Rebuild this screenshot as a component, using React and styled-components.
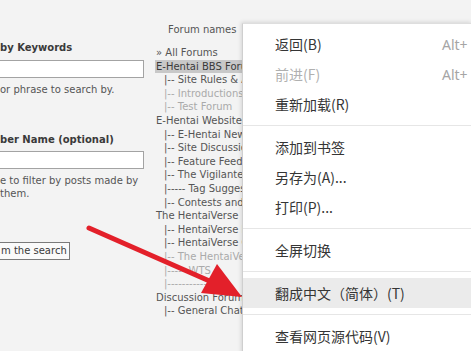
import React from "react";
import styled, { createGlobalStyle } from "styled-components";

const colors = {
  page: "#f3f3f3",
  text: "#3a3a3a",
  soft: "#555",
  faint: "#aaa",
  selected: "#c8c8c8",
  red: "#e3202a",
};

const GlobalStyle = createGlobalStyle`
  html, body {
    margin: 0;
    padding: 0;
    background: ${colors.page};
    overflow: hidden;
  }
  #root {
    width: 471px;
    height: 351px;
    overflow: hidden;
    position: relative;
  }
`;

const Page = styled.div`
  display: flex;
  gap: 11px;
  width: 471px;
  height: 351px;
  font-family: "DejaVu Sans", Verdana, sans-serif;
  font-size: 10px;
  color: ${colors.text};
`;

const SearchColumn = styled.div`
  width: 144px;
  flex-shrink: 0;
  display: flex;
  flex-direction: column;
  padding-top: 41px;
`;

const FieldTitle = styled.div`
  font-weight: bold;
  line-height: 14px;
  margin-top: ${(p) => p.$gap || 0}px;
  white-space: nowrap;
`;

const TextBox = styled.div`
  height: 16px;
  margin-top: ${(p) => p.$gap}px;
  background: #fff;
  border: 1px solid #a3a3a3;
  border-left: none;
`;

const Hint = styled.div`
  color: ${colors.soft};
  line-height: 13px;
  margin-top: 5px;
  white-space: nowrap;
`;

const SubmitButton = styled.div`
  align-self: flex-start;
  margin-top: 42px;
  height: 16px;
  line-height: 16px;
  padding: 0 2px 0 1px;
  background: #fafafa;
  border: 1px solid #7a7a7a;
  border-left: none;
  white-space: nowrap;
`;

const ForumColumn = styled.div`
  width: 87px;
  flex-shrink: 0;
  padding-top: 23px;
  overflow: hidden;
`;

const ColumnLabel = styled.div`
  color: ${colors.soft};
  line-height: 14px;
  padding-left: 13px;
  white-space: nowrap;
`;

const ForumList = styled.div`
  margin-top: 9px;
  display: flex;
  flex-direction: column;
`;

const Option = styled.div`
  height: 13.6px;
  line-height: 13.6px;
  padding-left: ${(p) => (p.$child ? 9 : 1)}px;
  white-space: nowrap;
  color: ${(p) => (p.$muted ? colors.faint : colors.soft)};
  background: ${(p) => (p.$selected ? colors.selected : "transparent")};
  ${(p) => p.$selected && `color: ${colors.text};`}
`;

const ContextMenu = styled.div`
  position: absolute;
  left: 242px;
  top: 23px;
  width: 229px;
  height: 340px;
  padding-top: 5px;
  background: #fff;
  border-left: 1px solid #cfcfcf;
  border-top: 1px solid #dedede;
  box-shadow: -1px -1px 4px rgba(0, 0, 0, 0.12);
  font-family: "Noto Sans CJK SC", "Noto Sans", sans-serif;
  font-size: 14px;
`;

const MenuItem = styled.div`
  height: 30px;
  display: grid;
  grid-template-columns: 167px auto;
  align-items: center;
  padding-left: 32px;
  color: ${(p) => (p.$disabled ? "#b0b0b0" : "#353535")};
  background: ${(p) => (p.$hover ? "#ebebeb" : "transparent")};
  white-space: nowrap;
`;

const Shortcut = styled.span`
  color: #a5a5a5;
  font-family: "Noto Sans", sans-serif;
`;

const Separator = styled.div`
  height: 1px;
  margin: 6px 0;
  background: #e6e6e6;
`;

const ArrowLayer = styled.svg`
  position: absolute;
  left: 0;
  top: 0;
  pointer-events: none;
`;

const forums = [
  { name: "» All Forums" },
  { name: "E-Hentai BBS Forums", selected: true },
  { name: "|-- Site Rules & Announcements", child: true },
  { name: "|-- Introductions", child: true, muted: true },
  { name: "|-- Test Forum", child: true, muted: true },
  { name: "E-Hentai Website" },
  { name: "|-- E-Hentai News", child: true },
  { name: "|-- Site Discussion", child: true },
  { name: "|-- Feature Feedback", child: true },
  { name: "|-- The Vigilante", child: true },
  { name: "|----- Tag Suggestions", child: true },
  { name: "|-- Contests and Events", child: true },
  { name: "The HentaiVerse" },
  { name: "|-- HentaiVerse Discussion", child: true },
  { name: "|-- HentaiVerse Guides", child: true },
  { name: "|-- The HentaiVerse Bazaar", child: true, muted: true },
  { name: "|----- WTS", child: true, muted: true },
  { name: "|-------------- V", child: true, muted: true },
  { name: "Discussion Forums" },
  { name: "|-- General Chat", child: true },
];

const menu = [
  { label: "返回(B)", shortcut: "Alt+" },
  { label: "前进(F)", shortcut: "Alt+", disabled: true },
  { label: "重新加载(R)" },
  "sep",
  { label: "添加到书签" },
  { label: "另存为(A)..." },
  { label: "打印(P)..." },
  "sep",
  { label: "全屏切换" },
  "sep",
  { label: "翻成中文（简体）(T)", hover: true },
  "sep",
  { label: "查看网页源代码(V)" },
];

function App() {
  return (
    <>
      <GlobalStyle />
      <Page>
        <SearchColumn>
          <FieldTitle>by Keywords</FieldTitle>
          <TextBox $gap={5} />
          <Hint>or phrase to search by.</Hint>
          <FieldTitle $gap={37}>ber Name (optional)</FieldTitle>
          <TextBox $gap={4} />
          <Hint>
            e to filter by posts made by
            <br />
            them.
          </Hint>
          <SubmitButton>m the search</SubmitButton>
        </SearchColumn>
        <ForumColumn>
          <ColumnLabel>Forum names</ColumnLabel>
          <ForumList>
            {forums.map((f, i) => (
              <Option
                key={i}
                $child={f.child}
                $muted={f.muted}
                $selected={f.selected}
              >
                {f.name}
              </Option>
            ))}
          </ForumList>
        </ForumColumn>
      </Page>
      <ContextMenu>
        {menu.map((m, i) =>
          m === "sep" ? (
            <Separator key={i} />
          ) : (
            <MenuItem key={i} $disabled={m.disabled} $hover={m.hover}>
              <span>{m.label}</span>
              {m.shortcut && <Shortcut>{m.shortcut}</Shortcut>}
            </MenuItem>
          )
        )}
      </ContextMenu>
      <ArrowLayer width="471" height="351" viewBox="0 0 471 351">
        <line
          x1="89"
          y1="228"
          x2="214"
          y2="283"
          stroke={colors.red}
          strokeWidth="5"
          strokeLinecap="round"
        />
        <polygon points="242,297 201,293 217,264" fill={colors.red} />
      </ArrowLayer>
    </>
  );
}

export default App;
